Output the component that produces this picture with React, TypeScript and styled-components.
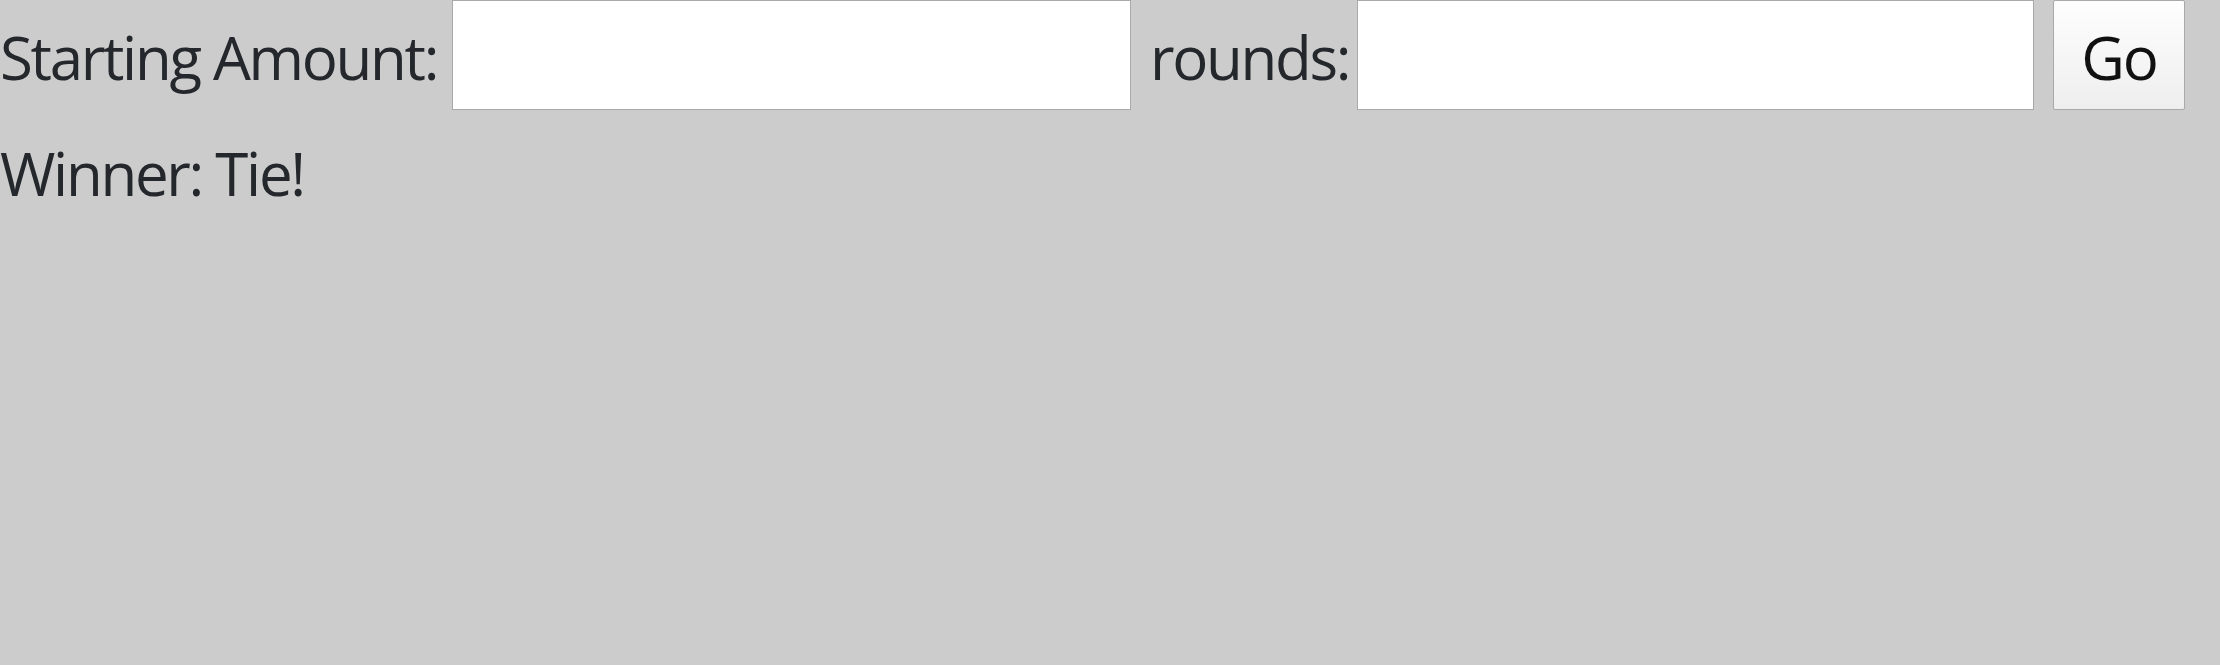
import React from "react";
import styled, { createGlobalStyle } from "styled-components";

const Global = createGlobalStyle`
  html, body {
    margin: 0;
    padding: 0;
    background: #cccccc;
    width: 2220px;
    height: 665px;
    overflow: hidden;
  }
  * { box-sizing: border-box; }
`;

const Page = styled.div`
  display: flex;
  flex-direction: column;
  font-family: "Open Sans", "Noto Sans", sans-serif;
  color: #24272b;
  font-size: 60px;
  letter-spacing: -2.3px;
  background: #cccccc;
  width: 2220px;
  height: 665px;
`;

const Row = styled.div`
  display: flex;
  align-items: center;
  gap: 19px;
  height: 110px;
`;

const Label = styled.span<{ $w: number }>`
  flex-shrink: 0;
  width: ${(p) => p.$w}px;
  white-space: nowrap;
  line-height: 1;
  padding-top: 3px;
`;

const Field = styled.input<{ $w: number }>`
  flex-shrink: 0;
  width: ${(p) => p.$w}px;
  height: 110px;
  border: 1px solid #a9a9a9;
  background: #ffffff;
  font: inherit;
  padding: 0 10px;
  outline: none;
  border-radius: 0;
`;

const Button = styled.button`
  flex-shrink: 0;
  width: 132px;
  height: 110px;
  border: 1px solid #a9a9a9;
  border-radius: 2px;
  background: linear-gradient(#fefefe, #eeeeee);
  font-family: "Open Sans", "Noto Sans", sans-serif;
  font-size: 60px;
  letter-spacing: -2px;
  line-height: 1;
  color: #111111;
  padding: 3px 0 0 0;
  display: flex;
  align-items: center;
  justify-content: center;
`;

const Result = styled.div`
  margin-top: 33px;
  line-height: 1;
  white-space: nowrap;
`;

export default function App() {
  return (
    <>
      <Global />
      <Page>
        <Row>
          <Label $w={433}>Starting Amount:</Label>
          <Field $w={679} />
          <Label $w={188}>rounds:</Label>
          <Field $w={677} />
          <Button>Go</Button>
        </Row>
        <Result>Winner: Tie!</Result>
      </Page>
    </>
  );
}
